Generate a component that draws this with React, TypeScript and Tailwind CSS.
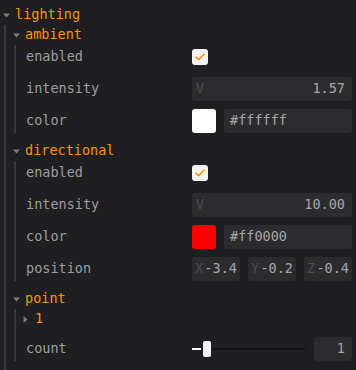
import React from "react";

const mono = { fontFamily: '"DejaVu Sans Mono", "Liberation Mono", monospace' };

function DownTri() {
  return (
    <svg width="7" height="5" viewBox="0 0 7 5">
      <path d="M0 0.5 L7 0.5 L3.5 4.5 Z" fill="#7b7b7e" />
    </svg>
  );
}

function RightTri() {
  return (
    <svg width="5" height="7" viewBox="0 0 5 7">
      <path d="M0.5 0 L4.5 3.5 L0.5 7 Z" fill="#7b7b7e" />
    </svg>
  );
}

function Folder({
  title,
  open = true,
  children,
  extraBottom = false,
}: {
  title: string;
  open?: boolean;
  children?: React.ReactNode;
  extraBottom?: boolean;
}) {
  return (
    <div className="flex flex-col">
      <div className="h-[20px] flex items-center">
        <span className="w-[15px] pl-[3px] flex items-center">
          {open ? <DownTri /> : <RightTri />}
        </span>
        <span className="text-[#f5960a]">{title}</span>
      </div>
      {open && (
        <div
          className={
            "ml-[4px] border-l-2 border-[#39393b] pl-[4px] flex flex-col gap-2" +
            (extraBottom ? " pb-[12px]" : "")
          }
        >
          {children}
        </div>
      )}
    </div>
  );
}

function Row({ label, children }: { label: string; children: React.ReactNode }) {
  return (
    <div className="h-[24px] flex items-center">
      <span className="flex-1 pl-[6px] text-[#9d9da0]">{label}</span>
      <div className="w-[160px] h-[24px] flex items-center">{children}</div>
    </div>
  );
}

function Check() {
  return (
    <div className="w-[16px] h-[16px] rounded-[3px] bg-[#f4f4f6] flex items-center justify-center">
      <svg width="10" height="8" viewBox="0 0 10 8">
        <path d="M1 4.2 L3.7 6.6 L9 1.2" stroke="#f5960a" strokeWidth="1.6" fill="none" strokeLinecap="round" strokeLinejoin="round" />
      </svg>
    </div>
  );
}

function NumInput({ value }: { value: string }) {
  return (
    <div className="w-full h-[24px] rounded-[3px] bg-[#2c2c2e] flex items-center px-[4px]">
      <span className="text-[#4d4d50]">V</span>
      <span className="flex-1 text-right pr-[3px] text-[#a6a6a9]">{value}</span>
    </div>
  );
}

function ColorInput({ swatch, hex }: { swatch: string; hex: string }) {
  return (
    <div className="w-full flex items-center gap-2">
      <div className="w-[24px] h-[24px] rounded-[3px] shrink-0" style={{ background: swatch }} />
      <div className="flex-1 h-[24px] rounded-[3px] bg-[#2c2c2e] flex items-center pl-[6px] text-[#a6a6a9]">
        {hex}
      </div>
    </div>
  );
}

function Vec({ axis, value }: { axis: string; value: string }) {
  return (
    <div className="w-[48px] h-[24px] rounded-[3px] bg-[#2c2c2e] flex items-center pl-[3px] pr-[3px]">
      <span className="text-[#4d4d50]">{axis}</span>
      <span className="flex-1 text-right text-[#a6a6a9]">{value}</span>
    </div>
  );
}

export default function App() {
  return (
    <div
      className="w-[356px] h-[370px] overflow-hidden bg-[#1f1f21] pt-[5px] pr-[4px] text-[13.5px] leading-none"
      style={mono}
    >
      <Folder title="lighting" extraBottom>
        <Folder title="ambient">
          <Row label="enabled">
            <Check />
          </Row>
          <Row label="intensity">
            <NumInput value="1.57" />
          </Row>
          <Row label="color">
            <ColorInput swatch="#ffffff" hex="#ffffff" />
          </Row>
        </Folder>
        <Folder title="directional">
          <Row label="enabled">
            <Check />
          </Row>
          <Row label="intensity">
            <NumInput value="10.00" />
          </Row>
          <Row label="color">
            <ColorInput swatch="#ff0000" hex="#ff0000" />
          </Row>
          <Row label="position">
            <div className="w-full flex items-center gap-2">
              <Vec axis="X" value="-3.4" />
              <Vec axis="Y" value="-0.2" />
              <Vec axis="Z" value="-0.4" />
            </div>
          </Row>
        </Folder>
        <Folder title="point">
          <Folder title="1" open={false} />
          <Row label="count">
            <div className="w-full flex items-center">
              <div className="w-[114px] h-[16px] flex items-center relative">
                <div className="w-[9px] h-[2px] bg-[#f4f4f6]" />
                <div className="ml-[2px] w-[8px] h-[16px] rounded-[2px] bg-[#f4f4f6]" />
                <div className="ml-[2px] w-[92px] h-[2px] bg-[#121214]" />
              </div>
              <div className="ml-auto w-[38px] h-[24px] rounded-[3px] bg-[#2c2c2e] flex items-center justify-end pr-[7px] text-[#a6a6a9]">
                1
              </div>
            </div>
          </Row>
        </Folder>
      </Folder>
    </div>
  );
}
